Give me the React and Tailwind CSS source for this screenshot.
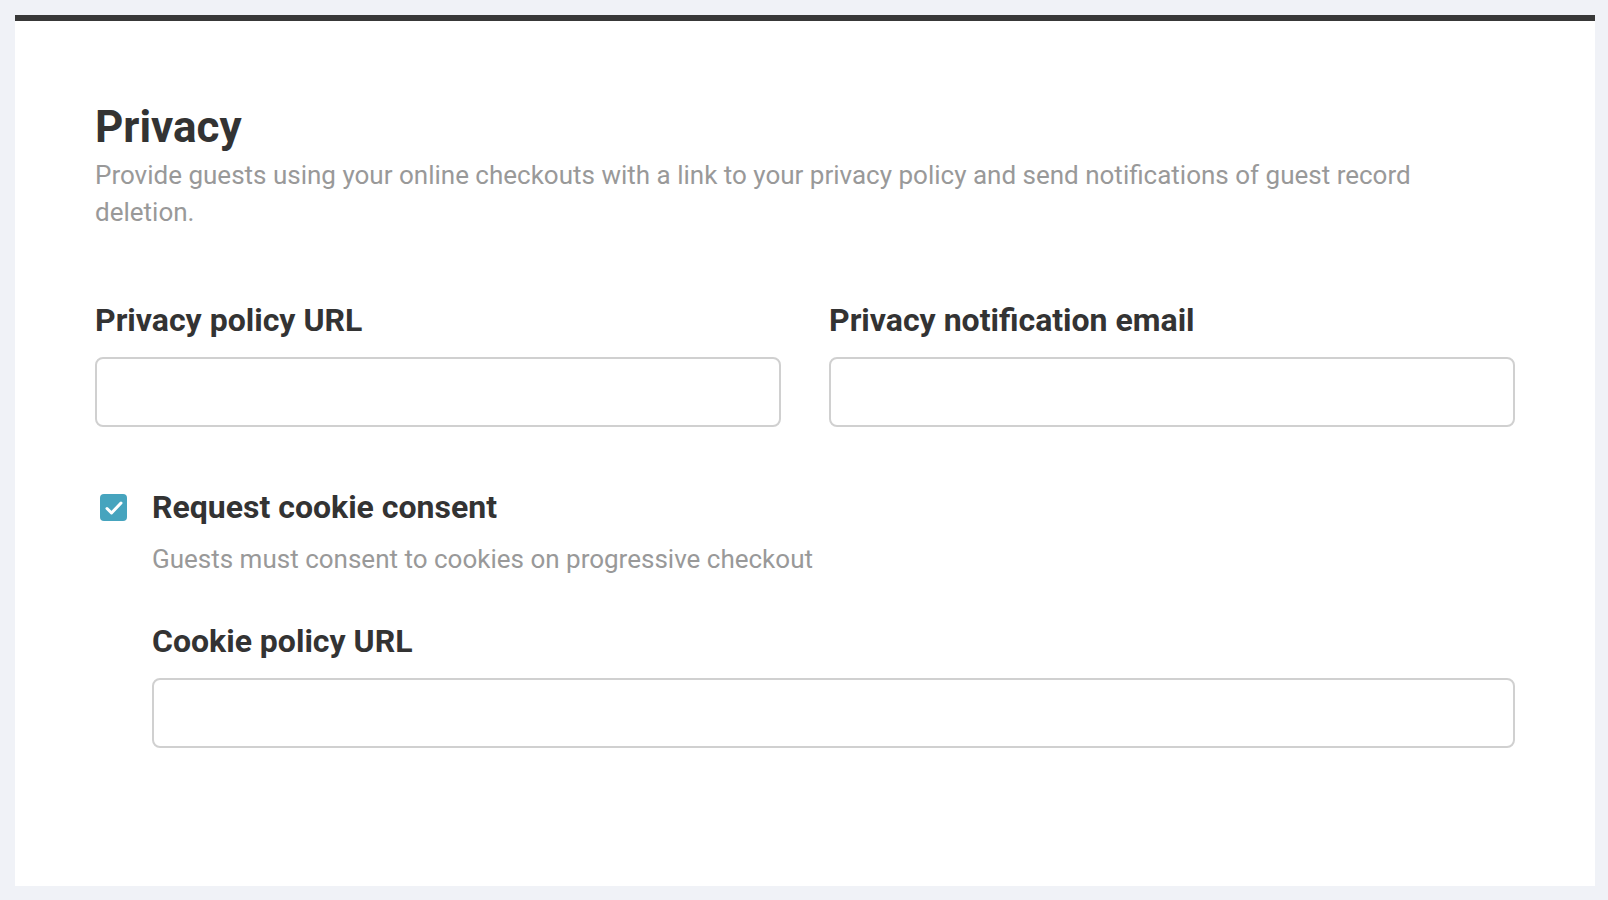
import React from 'react';

const font = { fontFamily: 'Roboto, "Noto Sans", sans-serif' };

function Field({ label, className = '' }) {
  return (
    <div className={`flex flex-col ${className}`}>
      <label className="text-[32px] leading-[38px] font-bold text-[#333333]">{label}</label>
      <input
        type="text"
        className="mt-[18px] h-[70px] w-full rounded-[8px] border-2 border-[#d0d0d0] bg-white px-4 text-[24px] text-[#333333] outline-none"
      />
    </div>
  );
}

function CheckIcon() {
  return (
    <svg viewBox="0 0 27 27" className="h-[27px] w-[27px]" fill="none" stroke="white" strokeWidth="3" strokeLinecap="round" strokeLinejoin="round">
      <path d="M7 14.5l4.5 4.5L21 9" />
    </svg>
  );
}

export default function App() {
  return (
    <div className="min-h-[900px] bg-[#f0f2f7] pl-[15px] pr-[13px] pt-[15px] pb-[14px]" style={font}>
      <div className="border-t-[6px] border-[#383838] bg-white px-[80px] pt-[80px] pb-[138px]">
        <h1 className="text-[44px] leading-[53px] font-bold text-[#333333]">Privacy</h1>
        <p className="mt-[3px] max-w-[1360px] text-[26px] leading-[37px] text-[#999999]">
          Provide guests using your online checkouts with a link to your privacy policy and send notifications of guest record deletion.
        </p>

        <div className="mt-[70px] grid grid-cols-2 gap-x-[48px]">
          <Field label="Privacy policy URL" />
          <Field label="Privacy notification email" />
        </div>

        <div className="mt-[61px] flex items-center">
          <div className="ml-[5px] flex h-[27px] w-[27px] items-center justify-center rounded-[4px] bg-[#46a4be]">
            <CheckIcon />
          </div>
          <span className="ml-[25px] text-[32px] leading-[38px] font-bold text-[#333333]">Request cookie consent</span>
        </div>

        <div className="pl-[57px]">
          <p className="mt-[15px] text-[26px] leading-[37px] text-[#999999]">
            Guests must consent to cookies on progressive checkout
          </p>
          <Field label="Cookie policy URL" className="mt-[44px]" />
        </div>
      </div>
    </div>
  );
}
